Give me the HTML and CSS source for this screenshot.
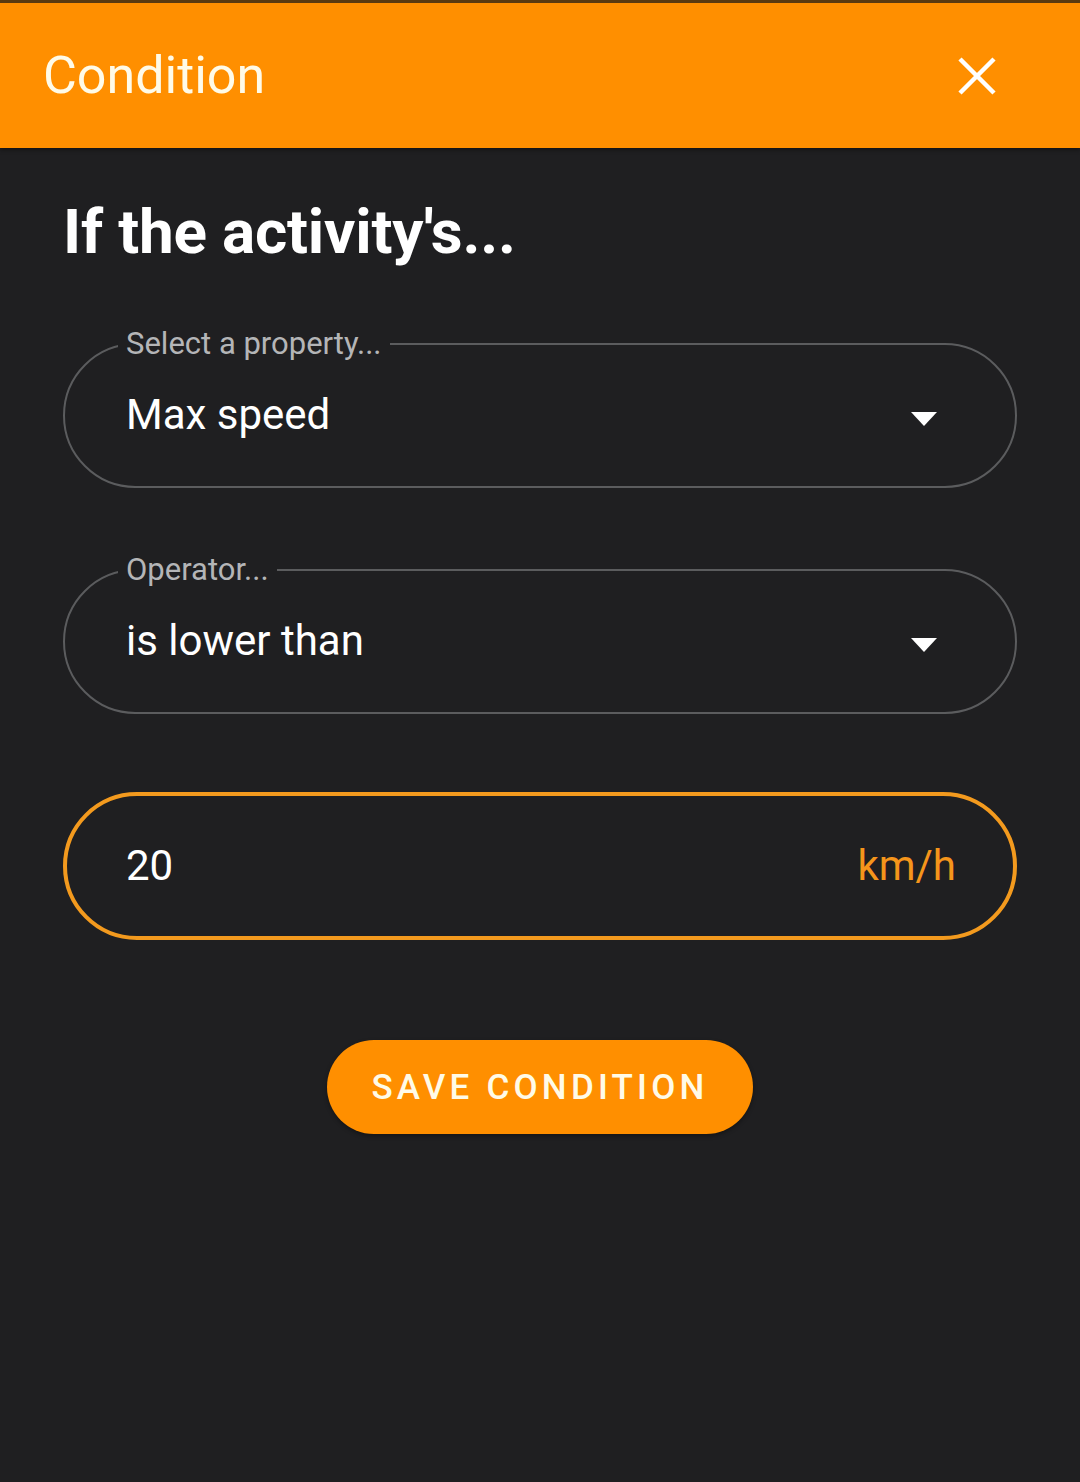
FILE: index.html
```html
<!DOCTYPE html>
<html>
<head>
<meta charset="utf-8">
<link rel="stylesheet" href="styles.css">
</head>
<body>
<header class="appbar">
  <h1 class="appbar-title">Condition</h1>
  <button class="close-btn" aria-label="Close">
    <svg width="40" height="40" viewBox="0 0 40 40"><path d="M3 3 L37 37 M37 3 L3 37" stroke="#fff" stroke-width="4.5" fill="none"/></svg>
  </button>
</header>
<main class="content">
  <h2 class="heading">If the activity's...</h2>
  <fieldset class="field">
    <legend class="field-label">Select a property...</legend>
    <div class="field-row">
      <span class="field-value">Max speed</span>
      <span class="caret"></span>
    </div>
  </fieldset>
  <fieldset class="field">
    <legend class="field-label">Operator...</legend>
    <div class="field-row">
      <span class="field-value">is lower than</span>
      <span class="caret"></span>
    </div>
  </fieldset>
  <div class="field field-active">
    <div class="field-row">
      <span class="field-value">20</span>
      <span class="unit">km/h</span>
    </div>
  </div>
  <div class="actions">
    <button class="save-btn">SAVE CONDITION</button>
  </div>
</main>
</body>
</html>
```
FILE: styles.css
```css
html, body {
  margin: 0;
  padding: 0;
}
body {
  background: #1f1f21;
  font-family: Roboto, "Liberation Sans", sans-serif;
  color: #fff;
  width: 1080px;
  height: 1482px;
  overflow: hidden;
}
.appbar {
  height: 148px;
  background: #ff8f00;
  display: flex;
  align-items: center;
  justify-content: space-between;
  padding: 0 83px 0 43px;
  box-sizing: border-box;
  box-shadow: 0 2px 4px rgba(0,0,0,0.4);
  border-top: 3px solid #5a3a10;
}
.appbar-title {
  margin: 0;
  font-weight: 400;
  font-size: 52px;
  color: #fffbe8;
}
.close-btn {
  background: none;
  border: 0;
  padding: 0;
  width: 40px;
  height: 40px;
  display: flex;
}
.content {
  padding: 0 63px;
}
.heading {
  margin: 44px 0 0 0;
  font-size: 62px;
  font-weight: 700;
  line-height: 79px;
  letter-spacing: -0.2px;
}
.field {
  margin: 0;
  box-sizing: border-box;
  width: 954px;
  height: 146px;
  border: 2px solid #5b5c5e;
  border-radius: 73px;
  padding: 0 78px 0 61px;
  min-inline-size: 0;
}
fieldset.field {
  margin-top: 57px;
  height: 160px;
}
fieldset.field + fieldset.field {
  margin-top: 66px;
}
.field-label {
  margin-left: -8px;
  padding: 0 8px;
  font-size: 31px;
  color: #b4b5b7;
  line-height: 32px;
}
.field-row {
  display: flex;
  align-items: center;
  justify-content: space-between;
  height: 126px;
}
fieldset .field-row {
  height: 128px;
  margin-top: -10px;
}
.field-value {
  font-size: 42px;
  color: #fff;
}
.caret {
  width: 0;
  height: 0;
  margin-top: 10px;
  border-left: 13px solid transparent;
  border-right: 13px solid transparent;
  border-top: 14px solid #fff;
}
.field-active {
  margin-top: 78px;
  height: 148px;
  border: 4px solid #f39a1e;
  border-radius: 74px;
  padding: 0 57px 0 59px;
}
.field-active .field-row {
  height: 138px;
}
.unit {
  font-size: 42px;
  color: #f5951b;
}
.actions {
  display: flex;
  justify-content: center;
  margin-top: 100px;
  padding-left: 0;
}
.save-btn {
  background: #ff8f00;
  color: #fffbe8;
  border: 0;
  border-radius: 47px;
  width: 426px;
  height: 94px;
  font-family: Roboto, "Liberation Sans", sans-serif;
  font-weight: 500;
  font-size: 35px;
  letter-spacing: 4.2px;
  box-shadow: 0 2px 4px rgba(0,0,0,0.35);
}
```
